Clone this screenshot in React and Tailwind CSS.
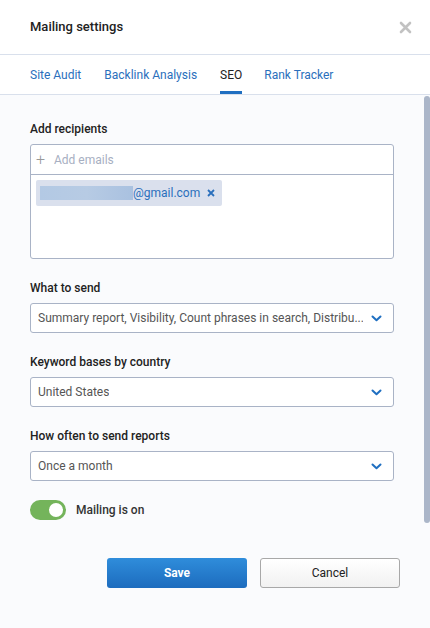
import React from "react";

function Chevron() {
  return (
    <svg width="11" height="7" viewBox="0 0 11 7" className="shrink-0">
      <path d="M1.5 1.5 L5.5 5.3 L9.5 1.5" fill="none" stroke="#1f6fc1" strokeWidth="2" strokeLinecap="round" strokeLinejoin="round" />
    </svg>
  );
}

function Select({ value }) {
  return (
    <div className="h-[30px] flex items-center justify-between border border-[#a9b3c6] rounded-[3px] bg-white pl-[7px] pr-[11px] min-w-0">
      <span className="text-[12px] text-[#555] whitespace-nowrap overflow-hidden min-w-0 mr-[8px]">{value}</span>
      <Chevron />
    </div>
  );
}

function Label({ children }) {
  return <div className="text-[12px] text-[#222] font-medium mb-[8px] leading-[14px]">{children}</div>;
}

export default function App() {
  return (
    <div className="w-[430px] h-[628px] flex flex-col bg-[#fafbfd] overflow-hidden" style={{ fontFamily: "Roboto, 'Liberation Sans', sans-serif" }}>
      <div className="h-[55px] shrink-0 bg-white flex items-center justify-between pl-[30px] pr-[18px] border-b border-[#d9e0ec]">
        <span className="text-[13px] font-medium text-[#222]">Mailing settings</span>
        <svg width="13" height="13" viewBox="0 0 13 13">
          <path d="M2 2 L11 11 M11 2 L2 11" stroke="#c2c2c2" strokeWidth="2.6" strokeLinecap="round" />
        </svg>
      </div>
      <div className="h-[40px] shrink-0 bg-white flex items-stretch pl-[30px] border-b border-[#d9e0ec] text-[12px]">
        <div className="flex items-center text-[#2a6fbc] mr-[23px]">Site Audit</div>
        <div className="flex items-center text-[#2a6fbc] mr-[23px]">Backlink Analysis</div>
        <div className="relative flex items-center text-[#222] mr-[22px]">
          SEO
          <div className="absolute bottom-0 left-0 right-0 h-[3px] bg-[#1f6fc1]"></div>
        </div>
        <div className="flex items-center text-[#2a6fbc]">Rank Tracker</div>
      </div>
      <div className="flex-1 flex min-h-0">
        <div className="flex-1 min-w-0 pl-[30px] pr-[30px] pt-[27px]">
          <Label>Add recipients</Label>
          <div className="border border-[#a9b3c6] rounded-[3px] bg-white h-[115px]">
            <div className="h-[30px] flex items-center border-b border-[#a9b3c6] pl-[5px]">
              <span className="text-[#999] text-[16px] leading-none w-[18px] font-light">+</span>
              <span className="text-[12px] text-[#a7afc2]">Add emails</span>
            </div>
            <div className="p-[5px]">
              <div className="inline-flex items-center h-[26px] bg-[#dae0ed] rounded-[2px] pl-[4px] pr-[7px]">
                <div className="w-[93px] h-[14px] bg-gradient-to-r from-[#b3c9e4] via-[#b7cbe4] to-[#a9c1e0]"></div>
                <span className="text-[12px] text-[#2a6fbc]">@gmail.com</span>
                <svg width="8" height="8" viewBox="0 0 8 8" className="ml-[7px]">
                  <path d="M1 1 L7 7 M7 1 L1 7" stroke="#2a6fbc" strokeWidth="1.8" />
                </svg>
              </div>
            </div>
          </div>
          <div className="mt-[22px]">
            <Label>What to send</Label>
            <Select value="Summary report, Visibility, Count phrases in search, Distribu..." />
          </div>
          <div className="mt-[22px]">
            <Label>Keyword bases by country</Label>
            <Select value="United States" />
          </div>
          <div className="mt-[22px]">
            <Label>How often to send reports</Label>
            <Select value="Once a month" />
          </div>
          <div className="mt-[19px] flex items-center">
            <div className="w-[36px] h-[20px] rounded-full bg-[#74b45b] flex items-center justify-end pr-[3px]">
              <div className="w-[14px] h-[14px] rounded-full bg-white"></div>
            </div>
            <span className="ml-[10px] text-[12px] text-[#333] font-medium">Mailing is on</span>
          </div>
        </div>
        <div className="w-[6px] shrink-0 flex flex-col">
          <div className="h-[1px]"></div>
          <div className="h-[427px] bg-[#abb6c9] rounded-b-[3px] rounded-t-[3px]"></div>
        </div>
      </div>
      <div className="h-[105px] shrink-0 flex justify-end pr-[30px] pt-[35px] gap-[13px]">
        <button className="w-[140px] h-[30px] rounded-[3px] bg-gradient-to-b from-[#2f8ddb] to-[#1d6cbe] text-white text-[12px] font-bold">Save</button>
        <button className="w-[140px] h-[30px] rounded-[3px] border border-[#a8a8a8] bg-gradient-to-b from-white to-[#f1f1f1] text-[#222] text-[12px]">Cancel</button>
      </div>
    </div>
  );
}
